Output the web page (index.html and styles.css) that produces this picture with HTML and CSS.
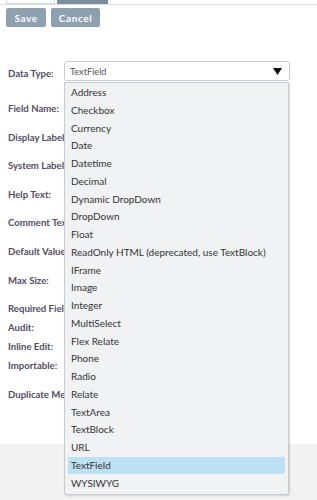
FILE: index.html
```html
<!DOCTYPE html>
<html lang="en">
<head>
  <meta charset="UTF-8">
  <title>Edit Field</title>
  <link rel="stylesheet" href="styles.css">
</head>
<body>
  <div class="page">
    <div class="tabs">
      <div class="tab"></div>
      <div class="tab active"></div>
    </div>

    <div class="buttons">
      <button class="btn save">Save</button>
      <button class="btn cancel">Cancel</button>
    </div>

    <div class="form">
      <div class="field first">
        <label>Data Type:</label>
      </div>
      <div class="field gap">
        <label>Field Name:</label>
      </div>
      <div class="field"><label>Display Label:</label></div>
      <div class="field"><label>System Label:</label></div>
      <div class="field"><label>Help Text:</label></div>
      <div class="field"><label>Comment Text:</label></div>
      <div class="field"><label>Default Value:</label></div>
      <div class="field"><label>Max Size:</label></div>
      <div class="field"><label>Required Field:</label></div>
      <div class="field tight"><label>Audit:</label></div>
      <div class="field tight"><label>Inline Edit:</label></div>
      <div class="field tight"><label>Importable:</label></div>
      <div class="field"><label>Duplicate Merge:</label></div>
    </div>

    <div class="select">
      <span>TextField</span>
      <svg width="9" height="7" viewBox="0 0 9 7"><polygon points="0,0 9,0 4.5,7" fill="#111"/></svg>
    </div>

    <ul class="options">
      <li>Address</li>
      <li>Checkbox</li>
      <li>Currency</li>
      <li>Date</li>
      <li>Datetime</li>
      <li>Decimal</li>
      <li>Dynamic DropDown</li>
      <li>DropDown</li>
      <li>Float</li>
      <li>ReadOnly HTML (deprecated, use TextBlock)</li>
      <li>IFrame</li>
      <li>Image</li>
      <li>Integer</li>
      <li>MultiSelect</li>
      <li>Flex Relate</li>
      <li>Phone</li>
      <li>Radio</li>
      <li>Relate</li>
      <li>TextArea</li>
      <li>TextBlock</li>
      <li>URL</li>
      <li class="selected">TextField</li>
      <li>WYSIWYG</li>
    </ul>
  </div>
  <div class="footer"></div>
</body>
</html>
```

FILE: styles.css
```css
body {
  margin: 0;
  font-family: Lato, "Open Sans", sans-serif;
  background: #fff;
}
.page {
  position: relative;
  height: 444px;
}
.tabs {
  display: flex;
  height: 4px;
  padding-left: 6px;
  border-bottom: 1px solid #d9dee4;
}
.tab {
  width: 49px;
  height: 4px;
  background: #fff;
  border: 1px solid #d2d8de;
  border-top: none;
  box-sizing: border-box;
}
.tab.active {
  width: 51px;
  margin-left: 2px;
  background: #7b8c9a;
  border-color: #7b8c9a;
}
.buttons {
  display: flex;
  gap: 5px;
  padding: 3px 0 0 6px;
}
.btn {
  height: 19px;
  padding: 0;
  border: none;
  border-radius: 2px;
  background: #8fa0b1;
  color: #fff;
  font-family: Lato, sans-serif;
  font-weight: bold;
  font-size: 10px;
  letter-spacing: 0.6px;
}
.btn.save {
  width: 40px;
}
.btn.cancel {
  width: 49px;
}
.form {
  padding-left: 8px;
}
.field {
  height: 14px;
  line-height: 14px;
  margin-top: 14.6px;
  white-space: nowrap;
}
.field.first {
  margin-top: 37px;
}
.field.gap {
  margin-top: 21px;
}
.field.tight {
  margin-top: 5px;
}
.field label {
  font-size: 9.6px;
  font-weight: bold;
  color: #534d64;
}
.select {
  position: absolute;
  left: 64px;
  top: 61px;
  width: 226px;
  height: 20px;
  box-sizing: border-box;
  border: 1px solid #c7cdd4;
  border-radius: 3px;
  background: #fff;
  display: flex;
  align-items: center;
  justify-content: space-between;
  padding: 0 7px 0 5px;
  font-size: 9.2px;
  color: #555;
}
.options {
  position: absolute;
  left: 64px;
  top: 82px;
  width: 225px;
  margin: 0;
  padding: 1px 0 2px;
  list-style: none;
  box-sizing: border-box;
  background: #f1f2f4;
  border: 1px solid #c8cacd;
  border-radius: 0 0 3px 3px;
  box-shadow: 1px 1px 2px rgba(0,0,0,0.15);
}
.options li {
  height: 17px;
  line-height: 17px;
  margin: 0 3px 0.75px;
  padding: 0 3px;
  font-size: 10px;
  color: #333;
  white-space: nowrap;
  border-radius: 2px;
}
.options li.selected {
  background: #bde0f2;
}
.footer {
  height: 56px;
  background: #f2f2f2;
}
```
